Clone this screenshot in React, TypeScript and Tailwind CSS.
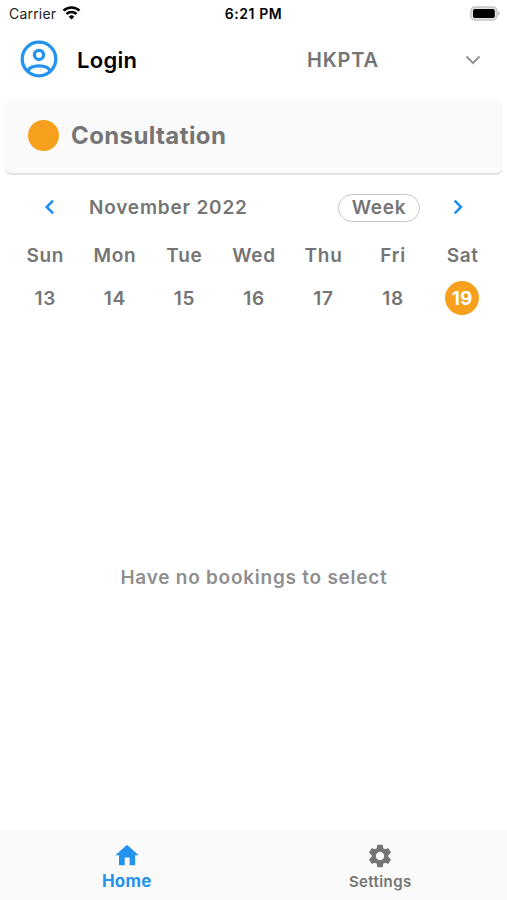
import React from 'react';
import { MdSettings } from 'react-icons/md';

const days: [string, number][] = [
  ['Sun', 13],
  ['Mon', 14],
  ['Tue', 15],
  ['Wed', 16],
  ['Thu', 17],
  ['Fri', 18],
  ['Sat', 19],
];

function StatusBar() {
  return (
    <div className="grid h-7 grid-cols-3 items-center pr-[7px] pl-[9px] text-black">
      <div className="flex items-center gap-[6px]">
        <span className="text-[14px] leading-7 tracking-[0.2px] text-[#222]">Carrier</span>
        <svg className="mb-[2px] h-[14px] w-[19px]" viewBox="0 0 18 14" fill="none" stroke="#000" strokeWidth="2.5">
          <path d="M1 4.7a11.5 11.5 0 0 1 16 0" />
          <path d="M4 8a7.2 7.2 0 0 1 10 0" />
          <path d="M9 13.6 6.2 10.7a4 4 0 0 1 5.6 0Z" fill="#000" stroke="none" />
        </svg>
      </div>
      <span className="-ml-[2px] text-center text-[14px] leading-7 font-semibold tracking-[0.6px]">6:21 PM</span>
      <svg className="mb-[2px] h-[15px] w-[30px] justify-self-end" viewBox="0 0 30 15">
        <rect x="0.9" y="1" width="26" height="13" rx="4" fill="#e4e4e4" stroke="#c4c4c4" strokeWidth="1.4" />
        <rect x="3" y="3" width="21.800" height="9" rx="1.800" fill="#000" />
        <path d="M28.2 5.3a2.4 2.4 0 0 1 0 4.4z" fill="#aaa" />
      </svg>
    </div>
  );
}

function Header() {
  return (
    <header className="flex h-[72px] items-start pt-[13px] pl-5">
      <svg className="mt-[-1px] h-[38px] w-[38px] shrink-0" viewBox="0 0 38 38" fill="none" stroke="#2493ee" strokeWidth="3.3">
        <circle cx="19" cy="19" r="16.8" />
        <circle cx="19" cy="14.9" r="4.6" />
        <path d="M7.8 31c1.600-3.800 6-5.200 11.200-5.200S28.600 27.200 30.200 31" />
      </svg>
      <span className="ml-[19px] w-[230px] text-[22px] leading-[38px] font-semibold tracking-[0.3px] text-black">Login</span>
      <span className="w-[157px] text-[20px] leading-[38px] font-semibold tracking-[0.8px] text-[#757575]">HKPTA</span>
      <svg className="mt-[13px] h-[12px] w-[18px]" viewBox="0 0 18 12" fill="none" stroke="#959595" strokeWidth="2">
        <path d="M2.500 2.500 9 9l6.500-6.500" />
      </svg>
    </header>
  );
}

export default function App() {
  return (
    <div className="flex h-[900px] w-full flex-col bg-white font-['Inter',sans-serif] text-[#757575]">
      <StatusBar />
      <Header />
      <section className="mx-[5px] flex h-[73px] items-center rounded-md bg-[#fafafa] pl-[23px] shadow-[0_2px_1px_#e2e2e2]">
        <span className="mb-[2px] h-[31px] w-[31px] rounded-full bg-[#f6a01e]" />
        <span className="mb-[2px] ml-3 text-[24px] leading-8 font-bold tracking-[0.4px]">Consultation</span>
      </section>
      <div className="mt-[14px] flex h-[41px] items-center">
        <svg className="mb-px ml-[43px] h-4 w-3" viewBox="0 0 12 16" fill="none" stroke="#1c8df5" strokeWidth="2.5">
          <path d="M10 1.700 3.700 8 10 14.300" />
        </svg>
        <span className="ml-[34px] w-[249px] pt-px text-[19px] font-semibold tracking-[0.8px]">November 2022</span>
        <span className="flex h-[28px] w-[82px] items-center justify-center rounded-full border border-[#c9c9c9] pt-[2px] text-[19px] font-semibold tracking-[0.7px]">Week</span>
        <svg className="mb-px ml-[32px] h-4 w-3" viewBox="0 0 12 16" fill="none" stroke="#1c8df5" strokeWidth="2.5">
          <path d="M2.700 1.700 9 8l-6.300 6.300" />
        </svg>
      </div>
      <div className="mx-[10px] mt-[13px] grid grid-cols-7 text-center text-[19px] font-semibold tracking-[0.7px]">
        {days.map(([name, date]) => (
          <div key={name} className="flex flex-col items-center">
            <span className="pl-px leading-[30px]">{name}</span>
            <span
              className={
                date === 19
                  ? 'mt-[10px] h-[34px] w-[34px] rounded-full bg-[#f6a01e] leading-[35px] font-bold tracking-[0.3px] text-white'
                  : 'mt-[10px] h-[34px] w-[34px] pl-px leading-[35px]'
              }
            >
              {date}
            </span>
          </div>
        ))}
      </div>
      <main className="flex flex-1 items-center justify-center pt-[12px] pl-px">
        <p className="text-[19px] font-semibold tracking-[0.75px] text-[#8f8f8f]">Have no bookings to select</p>
      </main>
      <nav className="grid h-[70px] grid-cols-2 bg-[#fafafa]">
        <div className="flex flex-col items-center pt-[12px] text-[#2493ee]">
          <svg className="h-[28px] w-[28px]" viewBox="0 0 28 28" fill="currentColor">
            <path d="M14 2.700 25.700 13.200H22.200V23.200H16.600V15.600H11.700V23.200H6V13.200H2.300Z" />
          </svg>
          <span className="text-[17px] leading-[22px] font-bold tracking-[0.2px]">Home</span>
        </div>
        <div className="flex flex-col items-center pt-[12px]">
          <MdSettings className="h-[28px] w-[28px]" />
          <span className="text-[15px] leading-[24px] font-semibold tracking-[0.4px]">Settings</span>
        </div>
      </nav>
    </div>
  );
}
